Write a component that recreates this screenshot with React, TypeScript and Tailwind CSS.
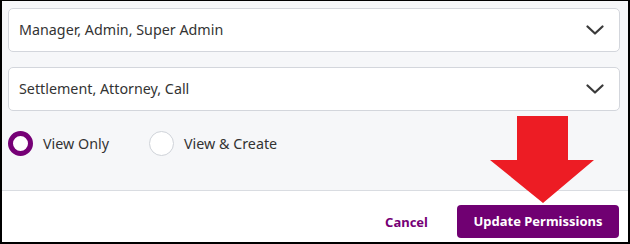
import { useState } from "react";

function Chevron() {
  return (
    <svg width="18" height="10" viewBox="0 0 18 10" fill="none" className="shrink-0">
      <polyline points="1.5,1.5 9,8.5 16.5,1.5" stroke="#3a3a3a" strokeWidth="2.2" strokeLinecap="round" strokeLinejoin="round" />
    </svg>
  );
}

function SelectBox({ value }: { value: string }) {
  return (
    <div className="flex h-[44px] items-center justify-between rounded-[5px] border border-[#d3d6dc] bg-white pl-[10px] pr-[15px]">
      <span className="text-[14.3px] text-[#333333]">{value}</span>
      <Chevron />
    </div>
  );
}

function Radio({ label, checked, onClick }: { label: string; checked: boolean; onClick: () => void }) {
  return (
    <button type="button" onClick={onClick} className="flex items-center gap-[10px]">
      <span
        className={
          checked
            ? "box-border h-[25px] w-[25px] rounded-full border-[5px] border-[#760076] bg-white"
            : "box-border h-[25px] w-[25px] rounded-full border-[1.5px] border-[#cfd3d9] bg-white"
        }
      />
      <span className="text-[14.3px] text-[#333333]">{label}</span>
    </button>
  );
}

export default function App() {
  const [mode, setMode] = useState("view");

  return (
    <div
      className="relative flex h-[244px] w-[630px] flex-col border-x-2 border-t border-b-2 border-black bg-white"
      style={{ fontFamily: '"Noto Sans", "Open Sans", sans-serif' }}
    >
      <div className="flex h-[190px] flex-col border-b border-[#d9dce1] bg-[#f6f7f9] px-[6px] pt-[7px]">
        <div className="flex flex-col gap-[15px] pr-[2px]">
          <SelectBox value="Manager, Admin, Super Admin" />
          <SelectBox value="Settlement, Attorney, Call" />
        </div>
        <div className="mt-[20px] flex items-center gap-[40px]">
          <Radio label="View Only" checked={mode === "view"} onClick={() => setMode("view")} />
          <Radio label="View & Create" checked={mode === "create"} onClick={() => setMode("create")} />
        </div>
      </div>

      <div className="flex flex-1 items-start justify-end pr-[9px] pt-[14px]">
        <button type="button" className="mt-[8px] text-[13px] font-bold text-[#760076]">
          Cancel
        </button>
        <button
          type="button"
          className="ml-[29px] h-[33px] w-[162px] rounded-[4px] bg-[#700072] text-[13px] font-bold text-white"
        >
          Update Permissions
        </button>
      </div>

      {/* annotation arrow over the footer */}
      <svg
        className="pointer-events-none absolute left-[486px] top-[115px]"
        width="108"
        height="88"
        viewBox="0 0 108 88"
      >
        <polygon points="29,0 80,0 80,44 106,44 55,87 2,44 29,44" fill="#ed1c24" />
      </svg>
    </div>
  );
}
